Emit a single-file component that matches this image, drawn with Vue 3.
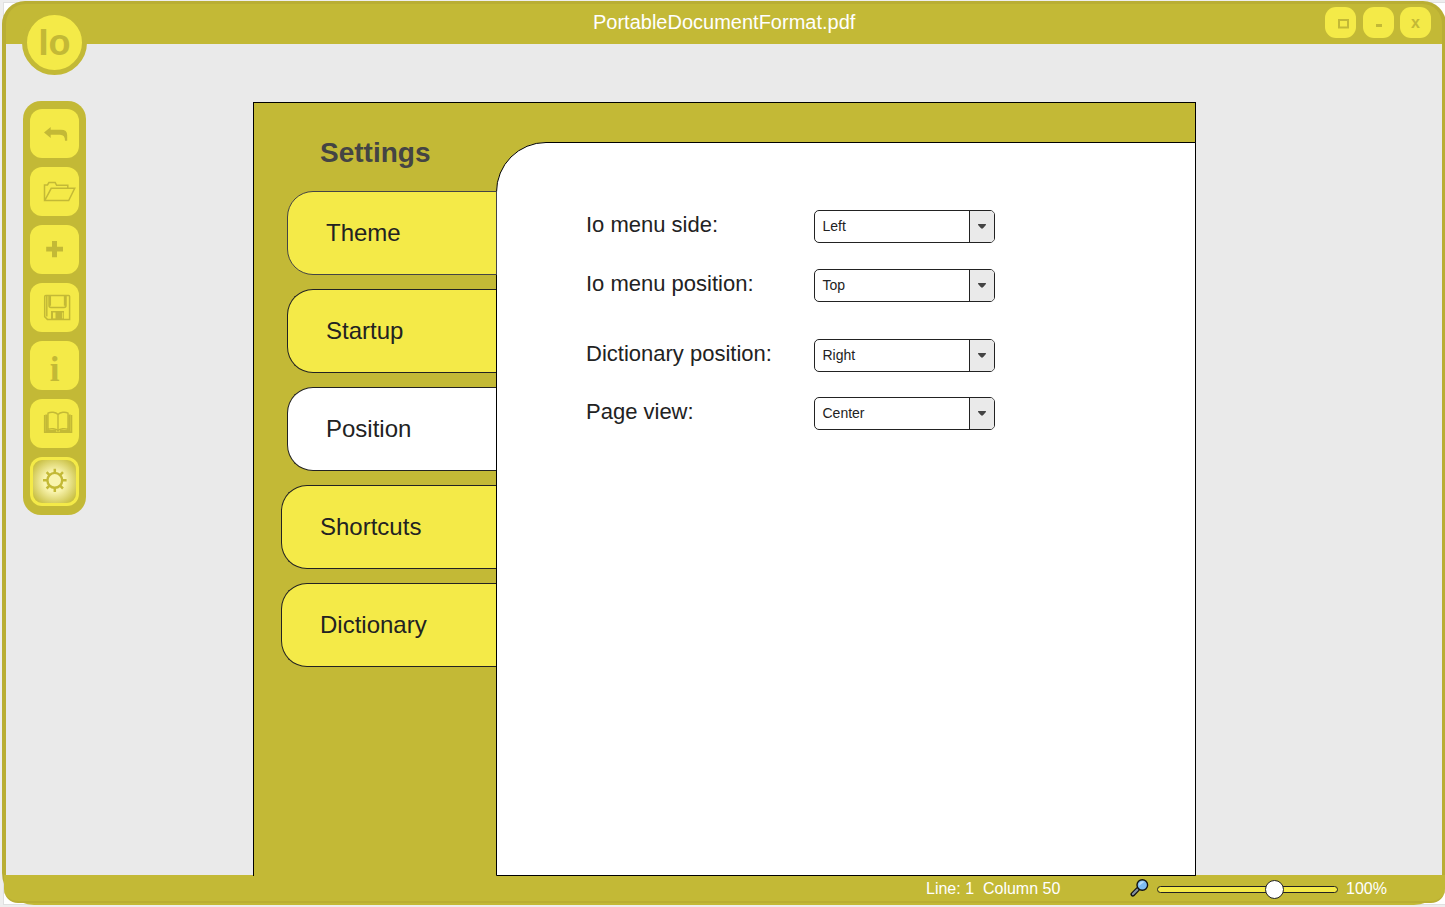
<script setup>
import { ref } from 'vue'

const tabs = [
  { name: 'Theme', inset: true, soft: true },
  { name: 'Startup', inset: true },
  { name: 'Position', inset: true },
  { name: 'Shortcuts' },
  { name: 'Dictionary' },
]
const activeTab = ref('Position')

const fields = [
  { label: 'Io menu side:', value: 'Left' },
  { label: 'Io menu position:', value: 'Top' },
  { label: 'Dictionary position:', value: 'Right', group: true },
  { label: 'Page view:', value: 'Center' },
]
</script>

<template>
  <div class="screen">
    <div class="frame">
      <header class="titlebar">
        <div class="logo">Io</div>
        <h1 class="title">PortableDocumentFormat.pdf</h1>
        <div class="controls">
          <button class="ctl" aria-label="Maximize">
            <svg viewBox="0 0 31 31"><rect x="14" y="13" width="9" height="7.5" fill="none" stroke="#c3b936" stroke-width="2" /></svg>
          </button>
          <button class="ctl second" aria-label="Minimize">
            <svg viewBox="0 0 31 31"><rect x="13" y="17" width="6" height="3" fill="#c3b936" /></svg>
          </button>
          <button class="ctl third">x</button>
        </div>
      </header>

      <main class="work">
        <nav class="toolbar">
          <button class="tool" aria-label="Undo">
            <svg viewBox="0 0 49 49"><path fill="#c3b936" d="M14 23.500 20.700 18v2.700H31q6.200 0 6.200 5.300v5.800H35q.2-6-5-6h-9.300V29z" /></svg>
          </button>
          <button class="tool" aria-label="Open">
            <svg viewBox="0 0 49 49" fill="none" stroke="#c3b936" stroke-width="1.500"><path d="M14.500 33.500V18h3l1.400-2.400h6.300l1.400 2.700h11.200v2.700M14.800 33.500l6.400-12.200h23.500l-6 12.200z" /></svg>
          </button>
          <button class="tool" aria-label="Add">
            <svg viewBox="0 0 49 49"><path fill="#c3b936" d="M22 16h5v5.700h6v4.900h-6v5.700h-5v-5.700h-5.800v-4.900H22z" /></svg>
          </button>
          <button class="tool" aria-label="Save">
            <svg viewBox="0 0 49 49" fill="none" stroke="#c3b936" stroke-width="1.500"><path d="M15.800 12.600h22.800q1 0 1 1v22.800H17.400l-2.700-2.700V13.800q0-1.200 1.100-1.200z" /><path d="M16.800 13v20.500M19 13v9.600q0 1.900 2 1.900h13q2 0 2-1.900V13M20.300 13v9.800M34.600 13v9.800" /><path fill="#c3b936" stroke="none" fill-rule="evenodd" d="M21 28h13v8.500H21zM23 29.500v6h2.500v-6zM32.300 29.500v6h.9v-6z" /></svg>
          </button>
          <button class="tool info">i</button>
          <button class="tool" aria-label="Dictionary">
            <svg viewBox="0 0 49 49" fill="none" stroke="#c3b936" stroke-width="1.400"><path d="M28 15.500c-2.300-2.700-7.500-2.800-10-1.300v16.200c3-1.200 8-1 10 1.300 2-2.300 7-2.500 10-1.300V14.200c-2.500-1.500-7.700-1.400-10 1.300zM28 15.500v17" /><path stroke-width="2.400" d="M16.500 15.500V32h9.500M39.500 15.500V32H30" /><path d="M14.600 16v17.200h27V16" /></svg>
          </button>
          <button class="tool current" aria-label="Settings">
            <svg viewBox="0 0 49 49" fill="none" stroke="#c3b936"><circle cx="24.800" cy="23.300" r="7.400" fill="#f9f4ae" stroke-width="2.400" /><path stroke-width="2.500" d="M24.800 15.500v-3.700M24.800 31v4M17 23.300h-4M32.600 23.300h4M19.300 17.800l-2.700-2.700M30.300 17.800l2.700-2.700M19.300 28.800l-2.700 2.700M30.300 28.800l2.700 2.700" /></svg>
          </button>
        </nav>

        <section class="dialog">
          <aside class="side">
            <h2 class="heading">Settings</h2>
            <button
              v-for="tab in tabs"
              :key="tab.name"
              class="tab"
              :class="{ inset: tab.inset, soft: tab.soft, active: tab.name === activeTab }"
              @click="activeTab = tab.name"
            >{{ tab.name }}</button>
          </aside>
          <div class="content">
            <div v-for="f in fields" :key="f.label" class="field" :class="{ group: f.group }">
              <span class="label">{{ f.label }}</span>
              <div class="select">
                <span class="value">{{ f.value }}</span>
                <span class="arrow"><svg viewBox="0 0 8 5"><path fill="#444" d="M.3 0h7.400q.6.600 0 1.200L5 4.300q-1 .8-2 0L.3 1.200q-.6-.6 0-1.200z" /></svg></span>
              </div>
            </div>
          </div>
        </section>
      </main>

      <footer class="status">
        <span class="cursor">Line: 1&nbsp; Column 50</span>
        <svg class="lens" viewBox="0 0 20 20">
          <path d="M7.500 11.500 2.800 16.300" stroke="#111" stroke-width="4.600" stroke-linecap="round" />
          <path d="M7.500 11.500 3 16.100" stroke="#8391a0" stroke-width="2.200" stroke-linecap="round" />
          <circle cx="12.300" cy="7" r="5.300" fill="#7fbdf2" stroke="#111" stroke-width="1.400" />
          <path d="M9.100 7.800a3.600 3.600 0 0 1 5.400-4z" fill="#b9def8" />
        </svg>
        <div class="slider"><div class="knob"></div></div>
        <span class="percent">100%</span>
      </footer>
    </div>
  </div>
</template>

<style>
html,
body {
  margin: 0;
  overflow: hidden;
}
</style>

<style scoped>
* {
  box-sizing: border-box;
}
.screen {
  position: relative;
  width: 1445px;
  height: 907px;
  padding: 1px 0 0 2px;
  overflow: hidden;
  background: #eee;
  font-family: "Liberation Sans", Arial, sans-serif;
  color: #222;
}
.screen::before {
  content: "";
  position: absolute;
  left: 3px;
  top: 2px;
  width: 1441px;
  height: 901px;
  border: 1px solid #e0e0e0;
  background: #fff;
}
button {
  padding: 0;
  border: 0;
  font-family: inherit;
}
.frame {
  position: relative;
  display: flex;
  flex-direction: column;
  width: 1444px;
  height: 904px;
  border: solid #b9ae34;
  border-width: 3px 4px 2px;
  border-bottom-color: #c3b936;
  border-radius: 23px 23px 32px 32px;
  background: #c3b936;
}
.titlebar {
  position: relative;
  display: flex;
  justify-content: flex-end;
  height: 40px;
  flex: none;
}
.title {
  position: absolute;
  left: 587px;
  top: 6px;
  margin: 0;
  font-size: 20px;
  line-height: 24px;
  font-weight: 400;
  color: #fff;
}
.logo {
  position: absolute;
  left: 16px;
  top: 6px;
  z-index: 2;
  width: 65px;
  height: 65px;
  border: 5px solid #c3b936;
  border-radius: 50%;
  background: #f4ea48;
  color: #c3b936;
  font-size: 36px;
  line-height: 55px;
  font-weight: 700;
  text-align: center;
}
.controls {
  display: flex;
  padding: 3px 11px 0 0;
}
.ctl {
  width: 31px;
  height: 31px;
  border-radius: 11px;
  background: #f4ea48;
  color: #c3b936;
  font-size: 16px;
  line-height: 31px;
  font-weight: 700;
}
.ctl svg,
.tool svg {
  display: block;
  width: 100%;
  height: 100%;
}
.second {
  margin-left: 7px;
}
.third {
  margin-left: 6px;
}
.work {
  display: flex;
  align-items: flex-start;
  height: 831px;
  flex: none;
  background: #eaeaea;
}
.toolbar {
  display: flex;
  flex-direction: column;
  gap: 9px;
  width: 63px;
  height: 414px;
  margin: 57px 0 0 17px;
  padding: 8px 7px;
  border-radius: 18px;
  background: #c3b936;
}
.tool {
  width: 49px;
  height: 49px;
  flex: none;
  border-radius: 12px;
  background: #f4ea48;
  color: #c3b936;
}
.info {
  padding-top: 4px;
  font: 700 35px/49px "Liberation Serif", serif;
}
.current {
  background: radial-gradient(circle, #f9f4ae 30%, #c3b936 80%);
  box-shadow: inset 0 0 0 3px #f4ea48;
}
.dialog {
  position: relative;
  z-index: 1;
  display: flex;
  width: 943px;
  height: 774px;
  margin: 58px 0 0 167px;
  border: 1px solid #000;
  border-bottom: 0;
  background: #c3b936;
}
.side {
  display: flex;
  flex-direction: column;
  align-items: flex-end;
  gap: 14px;
  width: 243px;
  flex: none;
}
.heading {
  align-self: flex-start;
  height: 32px;
  margin: 34px 0 8px 66px;
  font-size: 28px;
  line-height: 32px;
  color: #444;
}
.tab {
  width: 216px;
  height: 84px;
  padding-left: 38px;
  flex: none;
  border: 1px solid #222;
  border-right: 0;
  border-radius: 26px 0 0 26px;
  background: #f4ea48;
  color: #222;
  font-size: 24px;
  text-align: left;
}
.inset {
  width: 210px;
}
.soft {
  position: relative;
  z-index: 1;
  border: 1px solid #444;
}
.active {
  background: #fff;
}
.content {
  width: 700px;
  height: 734px;
  margin: 39px 0 0 -1px;
  padding: 67px 0 0 89px;
  flex: none;
  border: 1px solid #000;
  border-radius: 50px 0 0 0;
  background: #fff;
}
.field {
  display: flex;
  height: 33px;
  margin-bottom: 26px;
}
.field.group {
  margin-top: 37px;
  margin-bottom: 25px;
}
.label {
  width: 228px;
  font-size: 22px;
  line-height: 30px;
}
.select {
  display: flex;
  width: 181px;
  height: 33px;
  border: 1px solid #222;
  border-radius: 5px;
  overflow: hidden;
}
.value {
  flex: 1;
  padding-left: 7.5px;
  font-size: 14px;
  line-height: 31px;
}
.arrow {
  display: flex;
  align-items: center;
  justify-content: center;
  width: 25px;
  flex: none;
  border-left: 1px solid #222;
  background: #eaeaea;
}
.arrow svg {
  width: 8px;
  height: 5px;
}
.status {
  position: relative;
  display: flex;
  align-items: center;
  height: 28px;
  margin: 0 -3px 0 -2px;
  flex: none;
  border-bottom: 2px solid #b9ae34;
  border-radius: 0 0 14px 14px;
  background: #c3b936;
  color: #fff;
  font-size: 16px;
}
.cursor {
  width: 205px;
  margin-left: 922px;
  padding-top: 2px;
  white-space: nowrap;
  line-height: 26px;
}
.lens {
  width: 20px;
  height: 20px;
  margin: 0 1px 0 -1px;
  flex: none;
}
.slider {
  position: relative;
  width: 181px;
  height: 7px;
  margin: 2px 8px 0 6px;
  flex: none;
  border: 1px solid #222;
  border-radius: 4px;
  background: #f4ea48;
}
.knob {
  position: absolute;
  left: 107px;
  top: -7px;
  width: 19px;
  height: 19px;
  border: 1px solid #222;
  border-radius: 50%;
  background: #fff;
}
.percent {
  padding-top: 2px;
  line-height: 26px;
}
</style>
